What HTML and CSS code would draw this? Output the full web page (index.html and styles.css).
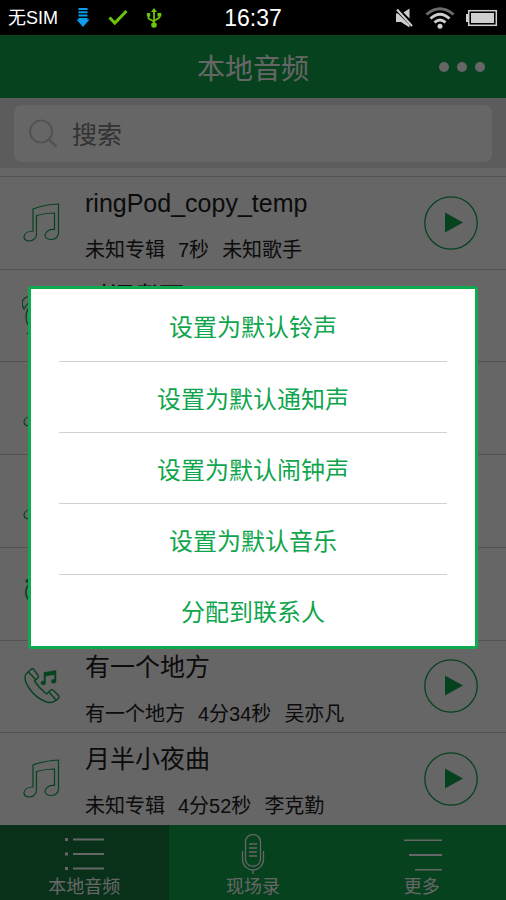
FILE: index.html
```html
<!DOCTYPE html>
<html lang="zh-CN">
<head>
<meta charset="utf-8">
<meta name="viewport" content="width=device-width, initial-scale=1">
<title>本地音频</title>
<link rel="stylesheet" href="styles.css">
</head>
<body>
<svg class="defs" width="0" height="0" aria-hidden="true">
  <symbol id="note" viewBox="0 0 38 40">
    <path d="M10 28V6Q22 1.500 35.500 1V30C35.500 34 32 36.500 28.500 36.500C24.500 36.500 22 34.500 22 32C22.500 28.500 26.500 26 31.500 26.500V10Q22.500 10 13.500 12.500V31C13.500 35.500 9.500 38 6 38C2.500 38 1 36 1 33.500C1.500 30 5.500 28 10 28Z" fill="none" stroke="currentColor" stroke-width="1.200"/>
  </symbol>
  <symbol id="play" viewBox="0 0 54 54">
    <circle cx="27" cy="27" r="26.200" fill="none" stroke="currentColor" stroke-width="1.300"/>
    <path d="M21 16.500L39 26.500L21 36.500Z" fill="currentColor"/>
  </symbol>
  <symbol id="clock" viewBox="0 0 38 40">
    <g fill="none" stroke="currentColor" stroke-width="1.300">
      <path d="M2 13C-1 8-1 2 7 .6C10 0 12 2 12 3Q6 6 2 13ZM36 13C39 8 39 2 31 .6C28 0 26 2 26 3Q32 6 36 13Z"/>
      <circle cx="20" cy="21" r="16"/>
      <path d="M20 10V21L26 25M9 34L5 38M30 34L34 38"/>
    </g>
  </symbol>
  <symbol id="bell" viewBox="0 0 38 40">
    <circle cx="4.500" cy="7" r="2" fill="currentColor"/>
    <path d="M6 10Q0 17 5 25Q13 35 28 29L31 11Q17 1 6 10Z" fill="none" stroke="currentColor" stroke-width="1.500"/>
  </symbol>
  <symbol id="phone" viewBox="0 0 38 40">
    <g fill="none" stroke="currentColor" stroke-width="1.400" stroke-linejoin="round">
      <path d="M3 8L8 3.300Q9.500 2 11 3.600L15 9.500Q16 11 14.500 12.200L11.500 15Q16 22 23.500 28L27.500 24.300Q28.800 23 30.300 24.300L35.500 29.500Q36.500 31 35.500 32.300Q30 38 23.500 36Q12.500 32 6 22Q0 13 3 8Z"/>
      <path d="M5.500 6L13 14M26 26L33 34"/>
    </g>
    <path d="M21 6.500L33 4.500V15.500A2.300 1.900 0 1 1 31.500 13.600V8.500L22.500 10V17A2.300 1.900 0 1 1 21 15.200Z" fill="currentColor" stroke="currentColor" stroke-width=".5"/>
  </symbol>
</svg>

<div class="screen">
  <div class="status">
    <div class="status-side">
      <span>无SIM</span>
      <svg width="14" height="20" viewBox="0 0 14 20"><path d="M2.500 0H11.500V2H2.500ZM2.500 3.300H11.500V5.300H2.500ZM2.500 6.600H11.500V8.600H2.500ZM2.500 9.900H11.500V11.500H13.500L7 19L.5 11.500H2.500Z" fill="#0a9dee"/></svg>
      <svg width="20" height="20" viewBox="0 0 20 20"><path d="M1.500 9.500L6.800 15L18.500 3" fill="none" stroke="#6cc40b" stroke-width="3"/></svg>
      <svg width="16" height="20" viewBox="0 0 16 20"><g fill="none" stroke="#6cc40b" stroke-width="1.800"><path d="M8 3V17M2.500 6V10.500L8 13.500M13.500 6V9.500L8 13"/></g><path d="M8 0L11 4H5ZM.8 5H4.200V8.500H.8ZM11.500 5H15.300V8.500H11.500Z" fill="#6cc40b"/><circle cx="8" cy="17" r="2.800" fill="#6cc40b"/></svg>
    </div>
    <time>16:37</time>
    <div class="status-side status-right">
      <svg width="18" height="20" viewBox="0 0 18 20"><path d="M0 5.500H2L9 12.500L13.500 17V19.500L5 14H0ZM7.500 4.500L13.500 .5V10.500Z" fill="#cfcfcf"/><path d="M1 1.500L16 18" stroke="#cfcfcf" stroke-width="2"/></svg>
      <svg width="30" height="22" viewBox="0 0 30 22"><g fill="none" stroke="#cfcfcf" stroke-width="2.800"><path d="M1.500 7.500Q15-4 28.500 7.500" stroke="#6b6b6b"/><path d="M5.500 11.500Q15 3 24.500 11.500M9.500 15.500Q15 10.500 20.500 15.500"/></g><circle cx="15" cy="19.300" r="2.500" fill="#cfcfcf"/></svg>
      <svg width="32" height="18" viewBox="0 0 32 18"><path d="M0 5H2V13H0Z" fill="#cfcfcf"/><rect x="2.700" y="1.700" width="27.600" height="14.600" fill="none" stroke="#cfcfcf" stroke-width="1.500"/><rect x="5" y="4" width="23" height="10" fill="#cfcfcf"/></svg>
    </div>
  </div>

  <div class="app">
    <header class="bar">
      <h1>本地音频</h1>
      <button class="dots" type="button" aria-label="更多操作"><i></i><i></i><i></i></button>
    </header>
    <div class="search">
      <label class="field">
        <svg width="28" height="29" viewBox="0 0 28 29"><g fill="none" stroke="#d0d0d0" stroke-width="2.200"><circle cx="12" cy="12.500" r="11"/><path d="M20 20.500L26.500 27" stroke-width="3" stroke-linecap="round"/></g></svg>
        <input type="search" placeholder="搜索" aria-label="搜索">
      </label>
    </div>
    <ul class="list">
      <li class="row">
        <svg class="kind"><use href="#note"/></svg>
        <div class="song"><h2>ringPod_copy_temp</h2><p><span>未知专辑</span><span>7秒</span><span>未知歌手</span></p></div>
        <button class="play" type="button" aria-label="播放"><svg><use href="#play"/></svg></button>
      </li>
      <li class="row">
        <svg class="kind wide"><use href="#clock"/></svg>
        <div class="song"><h2>时间煮雨</h2></div>
      </li>
      <li class="row"><svg class="kind"><use href="#note"/></svg></li>
      <li class="row"><svg class="kind"><use href="#note"/></svg></li>
      <li class="row"><svg class="kind"><use href="#bell"/></svg></li>
      <li class="row">
        <svg class="kind"><use href="#phone"/></svg>
        <div class="song"><h2>有一个地方</h2><p><span>有一个地方</span><span>4分34秒</span><span>吴亦凡</span></p></div>
        <button class="play" type="button" aria-label="播放"><svg><use href="#play"/></svg></button>
      </li>
      <li class="row">
        <svg class="kind"><use href="#note"/></svg>
        <div class="song"><h2>月半小夜曲</h2><p><span>未知专辑</span><span>4分52秒</span><span>李克勤</span></p></div>
        <button class="play" type="button" aria-label="播放"><svg><use href="#play"/></svg></button>
      </li>
    </ul>
    <nav class="tabs">
      <a class="tab active" href="#local">
        <svg width="40" height="42" viewBox="0 0 40 42"><path d="M1 4H4V7H1ZM1 18.500H4V21.500H1ZM1 33H4V36H1ZM9 4.500H40V6.500H9ZM9 19H40V21H9ZM9 33.500H40V35.500H9Z" fill="#fff"/></svg>
        <span>本地音频</span>
      </a>
      <a class="tab" href="#record">
        <svg width="24" height="42" viewBox="0 0 24 42"><g fill="none" stroke="#fff" stroke-width="1.300"><rect x="4.500" y=".7" width="15" height="31.500" rx="7"/><path d="M1.500 17V25C1.500 32 7 36 12 36S22.500 32 22.500 25V17M12 36V40M8 10H16M8 14H16M8 18H16M8 22H16"/></g></svg>
        <span>现场录</span>
      </a>
      <a class="tab" href="#more">
        <svg width="40" height="42" viewBox="0 0 40 42"><path d="M2 5.500H40V7H2ZM7 20H40V22H7ZM13 35H40V36.500H13Z" fill="#fff"/></svg>
        <span>更多</span>
      </a>
    </nav>
    <div class="scrim">
      <div class="dialog" role="dialog" aria-modal="true">
        <button type="button">设置为默认铃声</button>
        <button type="button">设置为默认通知声</button>
        <button type="button">设置为默认闹钟声</button>
        <button type="button">设置为默认音乐</button>
        <button type="button">分配到联系人</button>
      </div>
    </div>
  </div>
</div>
</body>
</html>
```
FILE: styles.css
```css
* {
  box-sizing: border-box;
  margin: 0;
  padding: 0;
}

body {
  background: #000;
  font-family: "Liberation Sans", "Noto Sans CJK SC", sans-serif;
  color: #202020;
}

button,
input {
  border: 0;
  background: none;
  font: inherit;
}

svg {
  display: block;
  flex: none;
}

.defs {
  position: absolute;
}

.screen {
  display: flex;
  flex-direction: column;
  min-height: 100vh;
}

.status {
  display: grid;
  grid-template-columns: 1fr auto 1fr;
  align-items: center;
  height: 35px;
  padding: 0 8px;
  color: #fff;
}

.status-side {
  display: flex;
  align-items: center;
  gap: 18px;
  font-size: 18px;
  line-height: 24px;
}

.status-right {
  justify-content: flex-end;
  gap: 11px;
}

time {
  font-size: 23px;
  line-height: 24px;
}

.app {
  position: relative;
  flex: 1;
  display: flex;
  flex-direction: column;
  background: #fff;
}

.bar {
  display: grid;
  grid-template-columns: 1fr auto 1fr;
  align-items: center;
  height: 63px;
  padding: 0 21px;
  background: #0fa54d;
  color: #fff;
}

.bar h1 {
  grid-column: 2;
  font-size: 28px;
  font-weight: 400;
}

.dots {
  display: flex;
  justify-content: flex-end;
  gap: 8px;
}

.dots i {
  width: 10px;
  height: 10px;
  border-radius: 50%;
  background: #fff;
}

.search {
  padding: 7px 14px 6px;
  background: #e6e6e6;
}

.field {
  display: flex;
  align-items: center;
  gap: 15px;
  height: 57px;
  padding: 0 15px;
  border-radius: 8px;
  background: #fff;
}

.field input {
  flex: 1;
  min-width: 0;
  padding-top: 3px;
  font-size: 25px;
  outline: 0;
}

.field input::placeholder {
  color: #808080;
}

.list {
  flex: 1;
  display: flex;
  flex-direction: column;
  margin-top: 8px;
  list-style: none;
}

.row {
  flex: 1 0 92px;
  display: flex;
  align-items: center;
  padding: 0 28px 0 23px;
  border-top: 1px solid #d0d0d0;
}

.kind {
  width: 38px;
  height: 40px;
  color: #0fa54d;
}

.wide {
  margin-left: -1px;
}

.song {
  flex: 1;
  align-self: flex-start;
  padding: 8px 0 0 24px;
}

.song h2 {
  font-size: 25px;
  font-weight: 400;
  line-height: 36px;
}

.song p {
  display: flex;
  gap: 13px;
  margin-top: 14px;
  font-size: 20px;
  line-height: 30px;
}

.play svg {
  width: 54px;
  height: 54px;
  color: #0fa54d;
}

.tabs {
  display: grid;
  grid-template-columns: repeat(3, 1fr);
  height: 75px;
}

.tab {
  display: flex;
  flex-direction: column;
  align-items: center;
  padding-top: 9px;
  background: #0fa54d;
  color: #fff;
  font-size: 18px;
  line-height: 23px;
  text-decoration: none;
}

.active {
  background: #177a43;
}

.scrim {
  position: absolute;
  inset: 0;
  display: flex;
  align-items: center;
  padding: 0 28px;
  background: rgba(0, 0, 0, 0.6);
}

.dialog {
  flex: 1;
  display: flex;
  flex-direction: column;
  padding: 1px 28px;
  border: 3px solid #12a850;
  border-radius: 3px;
  background: #fff;
}

.dialog button {
  height: 71px;
  color: #0fa54d;
  font-size: 24px;
}

.dialog button + button {
  border-top: 1px solid #d0d0d0;
}
```
